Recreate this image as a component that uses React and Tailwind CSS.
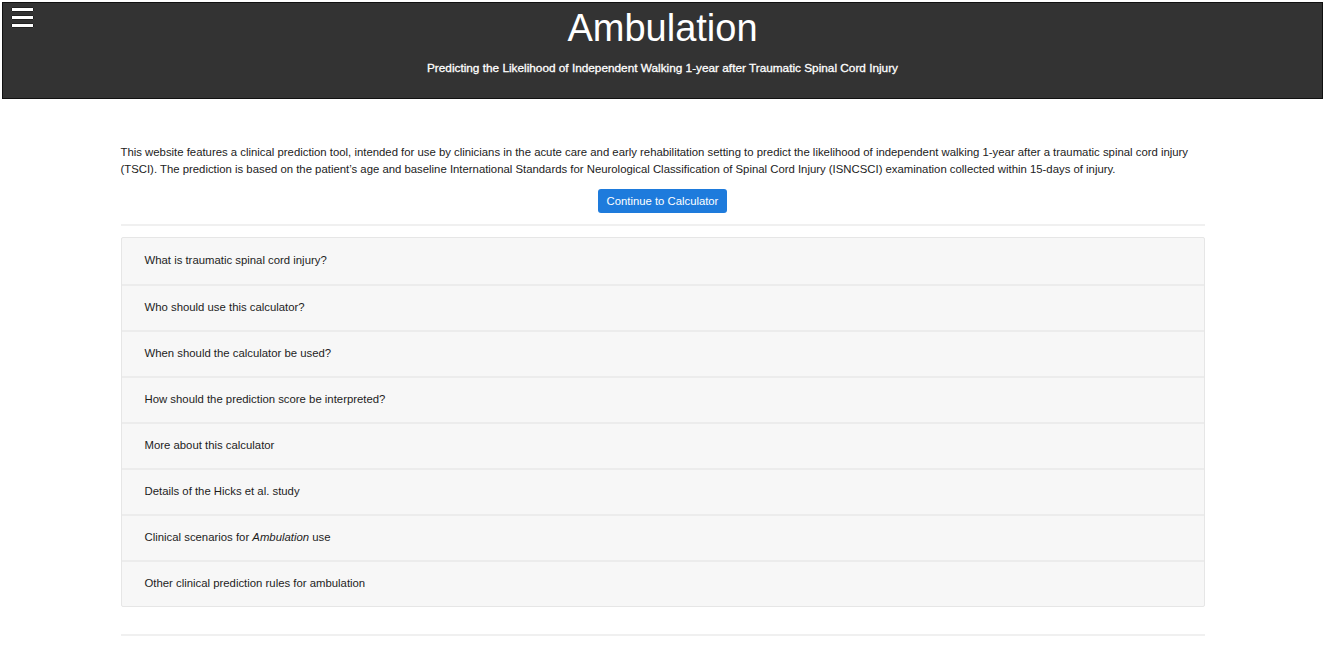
import React from 'react'

const items = [
  'What is traumatic spinal cord injury?',
  'Who should use this calculator?',
  'When should the calculator be used?',
  'How should the prediction score be interpreted?',
  'More about this calculator',
  'Details of the Hicks et al. study',
  'scenarios',
  'Other clinical prediction rules for ambulation',
]

export default function App() {
  return (
    <div className="min-h-[645px] bg-white text-[#1d1d1d]" style={{ fontFamily: '"Liberation Sans", Arial, sans-serif' }}>
      <div className="px-[2px] pt-[2px]">
        <header className="relative h-[97px] bg-[#333333] border border-[#111] flex flex-col items-center">
          <button className="absolute left-[8px] top-[4px] flex flex-col gap-[3px]">
            <span className="block w-[23px] h-[5px] bg-white border border-[#222] rounded-[1px]" />
            <span className="block w-[23px] h-[5px] bg-white border border-[#222] rounded-[1px]" />
            <span className="block w-[23px] h-[5px] bg-white border border-[#222] rounded-[1px]" />
          </button>
          <h1 className="mt-[3px] text-[38px] leading-[44px] text-white">Ambulation</h1>
          <p className="mt-[10px] text-[11.8px] text-white" style={{ WebkitTextStroke: '0.3px white' }}>
            Predicting the Likelihood of Independent Walking 1-year after Traumatic Spinal Cord Injury
          </p>
        </header>
      </div>

      <main className="w-[1084px] mx-auto pt-[45px]">
        <p className="text-[11.35px] leading-[17px] text-[#222]">
          This website features a clinical prediction tool, intended for use by clinicians in the acute care and early rehabilitation setting to predict the likelihood of independent walking 1-year after a traumatic spinal cord injury (TSCI). The prediction is based on the patient’s age and baseline International Standards for Neurological Classification of Spinal Cord Injury (ISNCSCI) examination collected within 15-days of injury.
        </p>
        <div className="flex justify-center mt-[11px]">
          <button className="h-[24px] w-[129px] rounded-[3px] bg-[#1e7bdc] text-white text-[11.3px]">
            Continue to Calculator
          </button>
        </div>
        <hr className="mt-[11px] border-t-2 border-[#f0f0f0]" />

        <div className="mt-[11px] border border-[#e6e6e6] rounded-[2px] bg-[#f7f7f7]">
          {items.map((t, i) => (
            <div key={i} className={'h-[46px] flex items-center pl-[23px] text-[11.35px] text-[#1d1d1d] ' + (i > 0 ? 'border-t-2 border-[#ececec]' : '')}>
              {t === 'scenarios' ? (
                <span>Clinical scenarios for <i>Ambulation</i> use</span>
              ) : t}
            </div>
          ))}
        </div>
        <hr className="mt-[27px] border-t-2 border-[#f0f0f0]" />
      </main>
    </div>
  )
}
